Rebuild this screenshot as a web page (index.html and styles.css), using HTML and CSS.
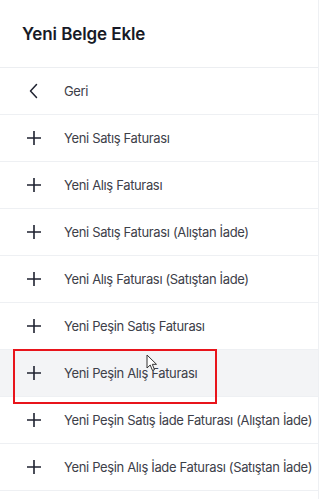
FILE: index.html
```html
<!DOCTYPE html>
<html lang="tr">
<head>
<meta charset="utf-8">
<title>Yeni Belge Ekle</title>
<link rel="stylesheet" href="styles.css">
</head>
<body>
<div class="panel">
  <div class="header"><h1 class="title">Yeni Belge Ekle</h1></div>
  <ul class="menu">
    <li class="item">
      <span class="icon"><svg width="16" height="16" viewBox="0 0 16 16"><path d="M10.5 1.5 L4.5 8 L10.5 14.5" fill="none" stroke="#1f2230" stroke-width="1.5" stroke-linecap="round" stroke-linejoin="round"/></svg></span>
      <span class="label">Geri</span>
    </li>
    <li class="item"><span class="icon"><svg class="plus" width="16" height="16" viewBox="0 0 16 16"><path d="M8 1 V15 M1 8 H15" stroke="#1f2230" stroke-width="1.6"/></svg></span><span class="label">Yeni Satış Faturası</span></li>
    <li class="item"><span class="icon"><svg class="plus" width="16" height="16" viewBox="0 0 16 16"><path d="M8 1 V15 M1 8 H15" stroke="#1f2230" stroke-width="1.6"/></svg></span><span class="label">Yeni Alış Faturası</span></li>
    <li class="item"><span class="icon"><svg class="plus" width="16" height="16" viewBox="0 0 16 16"><path d="M8 1 V15 M1 8 H15" stroke="#1f2230" stroke-width="1.6"/></svg></span><span class="label">Yeni Satış Faturası (Alıştan İade)</span></li>
    <li class="item"><span class="icon"><svg class="plus" width="16" height="16" viewBox="0 0 16 16"><path d="M8 1 V15 M1 8 H15" stroke="#1f2230" stroke-width="1.6"/></svg></span><span class="label">Yeni Alış Faturası (Satıştan İade)</span></li>
    <li class="item"><span class="icon"><svg class="plus" width="16" height="16" viewBox="0 0 16 16"><path d="M8 1 V15 M1 8 H15" stroke="#1f2230" stroke-width="1.6"/></svg></span><span class="label">Yeni Peşin Satış Faturası</span></li>
    <li class="item hover"><span class="icon"><svg class="plus" width="16" height="16" viewBox="0 0 16 16"><path d="M8 1 V15 M1 8 H15" stroke="#1f2230" stroke-width="1.6"/></svg></span><span class="label">Yeni Peşin Alış Faturası</span>
      <span class="mark"></span>
      <svg class="cursor" width="12" height="18" viewBox="0 0 12 18"><path d="M1 1 V14 L4.2 11 L6.5 16.5 L8.5 15.6 L6.3 10.3 L10.5 10.3 Z" fill="#fff" stroke="#333" stroke-width="1" stroke-linejoin="round"/></svg>
    </li>
    <li class="item"><span class="icon"><svg class="plus" width="16" height="16" viewBox="0 0 16 16"><path d="M8 1 V15 M1 8 H15" stroke="#1f2230" stroke-width="1.6"/></svg></span><span class="label">Yeni Peşin Satış İade Faturası (Alıştan İade)</span></li>
    <li class="item"><span class="icon"><svg class="plus" width="16" height="16" viewBox="0 0 16 16"><path d="M8 1 V15 M1 8 H15" stroke="#1f2230" stroke-width="1.6"/></svg></span><span class="label">Yeni Peşin Alış İade Faturası (Satıştan İade)</span></li>
  </ul>
</div>
</body>
</html>
```

FILE: styles.css
```css
html, body {
  margin: 0;
  padding: 0;
  background: #ffffff;
}
body {
  font-family: Inter, "Noto Sans", sans-serif;
  width: 321px;
  height: 499px;
  overflow: hidden;
}
.panel {
  width: 319px;
  border-right: 1px solid #eef0f3;
  min-height: 499px;
  box-sizing: border-box;
}
.header {
  height: 68px;
  display: flex;
  align-items: center;
  padding: 0 22px;
  border-bottom: 1px solid #eceef1;
  box-sizing: border-box;
}
.title {
  margin: 0;
  font-size: 17px;
  font-weight: 600;
  color: #171a26;
  letter-spacing: -0.1px;
}
.menu {
  list-style: none;
  margin: 0;
  padding: 0;
}
.item {
  position: relative;
  height: 47px;
  display: flex;
  align-items: center;
  border-bottom: 1px solid #eef0f3;
  box-sizing: border-box;
}
.item.hover {
  background: #f3f4f6;
}
.icon {
  flex: 0 0 64px;
  display: flex;
  justify-content: center;
  padding-left: 4px;
  box-sizing: border-box;
}
.label {
  font-size: 13px;
  letter-spacing: -0.35px;
  color: #3d4049;
  white-space: nowrap;
}
.mark {
  position: absolute;
  left: 13px;
  top: -1px;
  width: 204px;
  height: 55px;
  border: 2px solid #e8141b;
  box-sizing: border-box;
}
.cursor {
  position: absolute;
  left: 146px;
  top: 4px;
}
```
